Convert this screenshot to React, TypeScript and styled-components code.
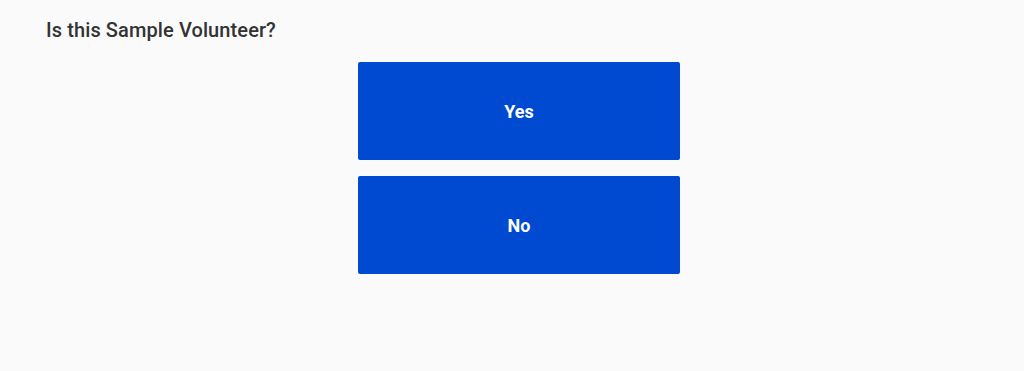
import React from 'react';
import styled, { createGlobalStyle } from 'styled-components';

const GlobalStyle = createGlobalStyle`
	html, body {
		margin: 0;
		background: #fafafa;
		font-family: Roboto, "Liberation Sans", sans-serif;
	}
`;

function App() {
	const [answer, setAnswer] = React.useState<string | null>(null);

	return (
		<Page>
			<GlobalStyle />
			<Question>Is this Sample Volunteer?</Question>
			<Choices>
				<ChoiceBtn $active={answer === 'yes'} onClick={() => setAnswer('yes')}>
					Yes
				</ChoiceBtn>
				<ChoiceBtn $active={answer === 'no'} onClick={() => setAnswer('no')}>
					No
				</ChoiceBtn>
			</Choices>
		</Page>
	);
}

const Page = styled.div`
	min-height: 371px;
	padding: 16px 32px 16px 46px;
	box-sizing: border-box;
`;

const Question = styled.h2`
	margin: 0;
	font-size: 20px;
	line-height: 28px;
	font-weight: 500;
	letter-spacing: 0.1px;
	color: #333333;
`;

const Choices = styled.div`
	display: flex;
	flex-direction: column;
	align-items: center;
	gap: 16px;
	margin-top: 18px;
`;

const ChoiceBtn = styled.button<{ $active: boolean }>`
	width: 322px;
	height: 98px;
	border: none;
	border-radius: 2px;
	background: ${(p) => (p.$active ? '#003fb8' : '#004ad1')};
	color: #ffffff;
	font-family: inherit;
	font-size: 18px;
	font-weight: 700;
	cursor: pointer;
	&:hover {
		background: #0043c0;
	}
`;

export default App;
